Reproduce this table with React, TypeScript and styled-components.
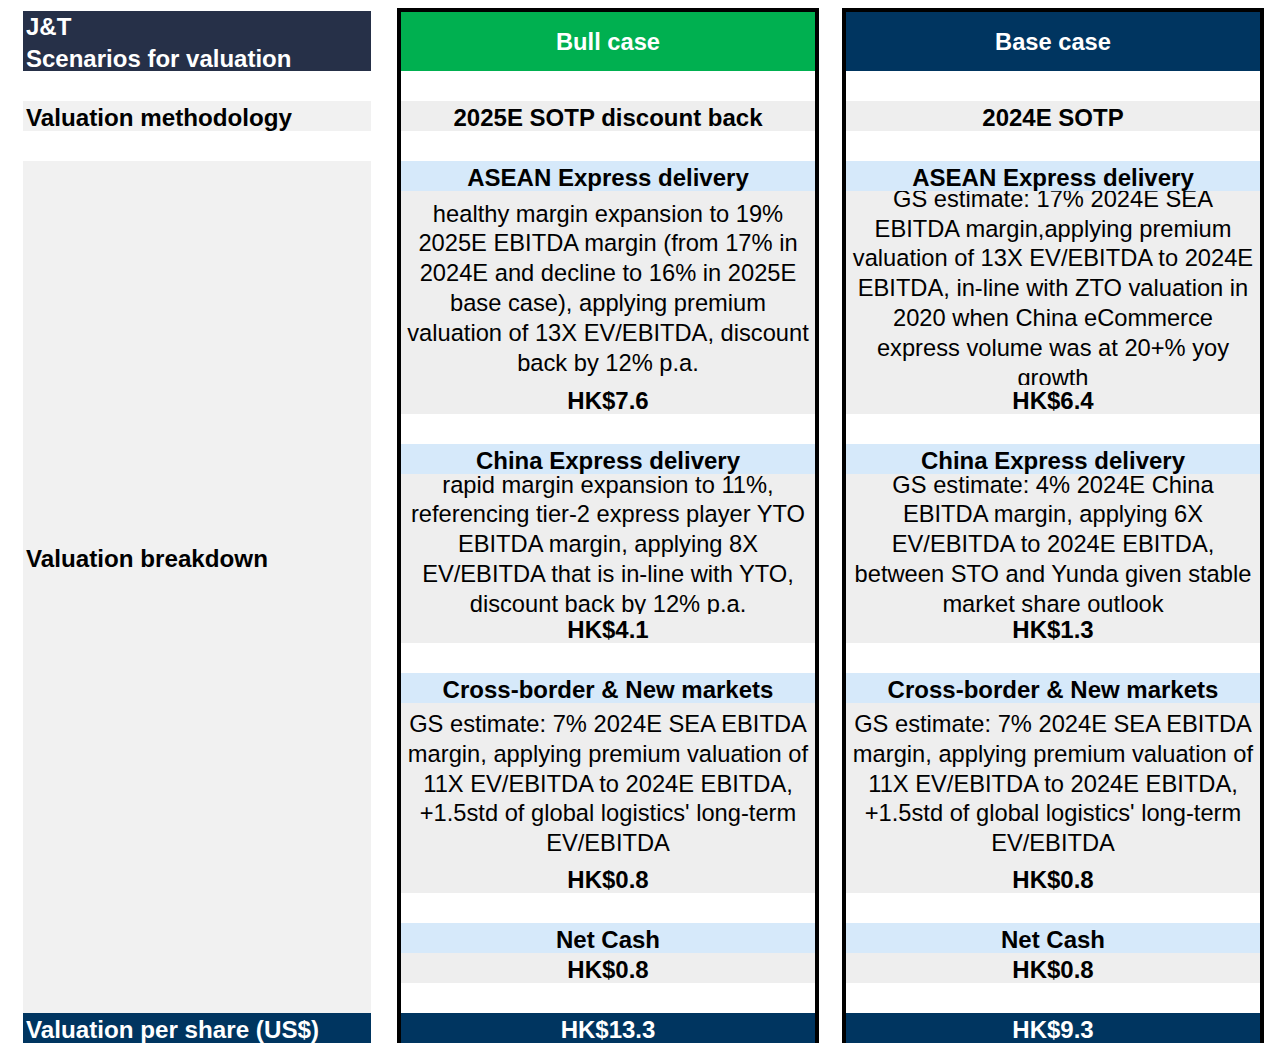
import React from "react";
import styled, { createGlobalStyle } from "styled-components";

const Global = createGlobalStyle`
  html, body { margin: 0; padding: 0; background: #ffffff; }
  body { font-family: "Liberation Sans", Arial, sans-serif; color: #000; }
`;

const Page = styled.div`
  display: flex;
  align-items: flex-start;
  padding: 8px 0 0 23px;
  width: 1280px;
  height: 1061px;
  box-sizing: border-box;
  font-size: 23.7px;
  line-height: 29.8px;
`;

const LeftCol = styled.div`
  width: 348px;
  margin-top: 3px;
  margin-right: 26px;
  display: flex;
  flex-direction: column;
`;

const TitleBlock = styled.div`
  height: 60px;
  background: #263048;
  color: #ffffff;
  font-weight: 700;
  font-size: 24px;
  padding-left: 3px;
  display: flex;
  flex-direction: column;
  justify-content: center;
  line-height: 32px;
  box-sizing: border-box;
  padding-top: 4px;
  overflow: hidden;
`;

const Spacer = styled.div<{ $h?: number }>`
  height: ${(p) => p.$h ?? 30}px;
`;

const LabelRow = styled.div<{ $bg: string; $color?: string }>`
  height: 30px;
  box-sizing: border-box;
  padding: 3px 0 0 3px;
  background: ${(p) => p.$bg};
  color: ${(p) => p.$color ?? "#000"};
  font-weight: 700;
  font-size: 24.2px;
  display: flex;
  align-items: center;
  white-space: nowrap;
`;

const BreakdownBlock = styled.div`
  background: #f1f1f1;
  display: flex;
  flex-direction: column;
`;

const BreakdownLabel = styled.div`
  height: 792px;
  box-sizing: border-box;
  padding: 3px 0 0 3px;
  font-weight: 700;
  font-size: 24.2px;
  display: flex;
  align-items: center;
`;

const CaseCol = styled.div<{ $mr: number }>`
  width: 414px;
  border: 4px solid #000;
  border-bottom: none;
  margin-right: ${(p) => p.$mr}px;
  display: flex;
  flex-direction: column;
  text-align: center;
`;

const CaseHeader = styled.div<{ $bg: string }>`
  height: 59px;
  box-sizing: border-box;
  padding-top: 2px;
  background: ${(p) => p.$bg};
  color: #fff;
  font-weight: 700;
  display: flex;
  align-items: center;
  justify-content: center;
`;

const Cell = styled.div<{ $bg: string; $h?: number; $color?: string; $bold?: boolean }>`
  height: ${(p) => p.$h ?? 30}px;
  box-sizing: border-box;
  padding-top: 3px;
  background: ${(p) => p.$bg};
  color: ${(p) => p.$color ?? "#000"};
  font-weight: ${(p) => (p.$bold ? 700 : 400)};
  font-size: ${(p) => (p.$bold ? "24px" : "23.7px")};
  display: flex;
  align-items: center;
  justify-content: center;
  white-space: nowrap;
`;

const Desc = styled.div<{ $h: number }>`
  height: ${(p) => p.$h}px;
  box-sizing: border-box;
  padding-top: 2px;
  background: #eeeeee;
  overflow: hidden;
  display: flex;
  flex-direction: column;
  justify-content: center;
  align-items: center;
  position: relative;
  z-index: 0;
`;

const DescLine = styled.div`
  height: 29.8px;
  flex-shrink: 0;
  white-space: nowrap;
`;

const GREY = "#eeeeee";
const BLUE = "#d6e9fa";
const NAVY = "#003560";

type Section = {
  title: string;
  lines?: string[];
  descH?: number;
  value: string;
  valueH?: number;
};

type CaseData = {
  name: string;
  headerBg: string;
  method: string;
  sections: Section[];
  total: string;
};

const cases: CaseData[] = [
  {
    name: "Bull case",
    headerBg: "#00b050",
    method: "2025E SOTP discount back",
    total: "HK$13.3",
    sections: [
      {
        title: "ASEAN Express delivery",
        descH: 194,
        lines: [
          "healthy margin expansion to 19%",
          "2025E EBITDA margin (from 17% in",
          "2024E and decline to 16% in 2025E",
          "base case), applying premium",
          "valuation of 13X EV/EBITDA, discount",
          "back by 12% p.a.",
        ],
        value: "HK$7.6",
      },
      {
        title: "China Express delivery",
        descH: 140,
        lines: [
          "rapid margin expansion to 11%,",
          "referencing tier-2 express player YTO",
          "EBITDA margin, applying 8X",
          "EV/EBITDA that is in-line with YTO,",
          "discount back by 12% p.a.",
        ],
        value: "HK$4.1",
      },
      {
        title: "Cross-border & New markets",
        descH: 161,
        lines: [
          "GS estimate: 7% 2024E SEA EBITDA",
          "margin, applying premium valuation of",
          "11X EV/EBITDA to 2024E EBITDA,",
          "+1.5std of global logistics' long-term",
          "EV/EBITDA",
        ],
        value: "HK$0.8",
      },
      { title: "Net Cash", value: "HK$0.8", valueH: 30 },
    ],
  },
  {
    name: "Base case",
    headerBg: NAVY,
    method: "2024E SOTP",
    total: "HK$9.3",
    sections: [
      {
        title: "ASEAN Express delivery",
        descH: 194,
        lines: [
          "GS estimate: 17% 2024E SEA",
          "EBITDA margin,applying premium",
          "valuation of 13X EV/EBITDA to 2024E",
          "EBITDA, in-line with ZTO valuation in",
          "2020 when China eCommerce",
          "express volume was at 20+% yoy",
          "growth",
        ],
        value: "HK$6.4",
      },
      {
        title: "China Express delivery",
        descH: 140,
        lines: [
          "GS estimate: 4% 2024E China",
          "EBITDA margin, applying 6X",
          "EV/EBITDA to 2024E EBITDA,",
          "between STO and Yunda given stable",
          "market share outlook",
        ],
        value: "HK$1.3",
      },
      {
        title: "Cross-border & New markets",
        descH: 161,
        lines: [
          "GS estimate: 7% 2024E SEA EBITDA",
          "margin, applying premium valuation of",
          "11X EV/EBITDA to 2024E EBITDA,",
          "+1.5std of global logistics' long-term",
          "EV/EBITDA",
        ],
        value: "HK$0.8",
      },
      { title: "Net Cash", value: "HK$0.8", valueH: 30 },
    ],
  },
];

const Heading = styled(Cell)`
  position: relative;
  z-index: 1;
`;

const Value = styled(Cell)`
  position: relative;
  z-index: 1;
`;

function CaseColumn({ data, mr }: { data: CaseData; mr: number }) {
  return (
    <CaseCol $mr={mr}>
      <CaseHeader $bg={data.headerBg}>{data.name}</CaseHeader>
      <Spacer />
      <Cell $bg={GREY} $bold>
        {data.method}
      </Cell>
      <Spacer />
      {data.sections.map((s) => (
        <React.Fragment key={s.title}>
          <Heading $bg={BLUE} $bold>
            {s.title}
          </Heading>
          {s.lines && s.descH && (
            <Desc $h={s.descH}>
              {s.lines.map((l, i) => (
                <DescLine key={i}>{l}</DescLine>
              ))}
            </Desc>
          )}
          <Value $bg={GREY} $h={s.valueH ?? 29} $bold>
            {s.value}
          </Value>
          <Spacer />
        </React.Fragment>
      ))}
      <Cell $bg={NAVY} $color="#fff" $bold>
        {data.total}
      </Cell>
    </CaseCol>
  );
}

export default function App() {
  return (
    <>
      <Global />
      <Page>
        <LeftCol>
          <TitleBlock>
            <div>J&amp;T</div>
            <div>Scenarios for valuation</div>
          </TitleBlock>
          <Spacer />
          <LabelRow $bg="#f1f1f1">Valuation methodology</LabelRow>
          <Spacer />
          <BreakdownBlock>
            <BreakdownLabel>Valuation breakdown</BreakdownLabel>
            <Spacer $h={60} />
          </BreakdownBlock>
          <LabelRow $bg={NAVY} $color="#fff">
            Valuation per share (US$)
          </LabelRow>
        </LeftCol>
        <CaseColumn data={cases[0]} mr={23} />
        <CaseColumn data={cases[1]} mr={0} />
      </Page>
    </>
  );
}
